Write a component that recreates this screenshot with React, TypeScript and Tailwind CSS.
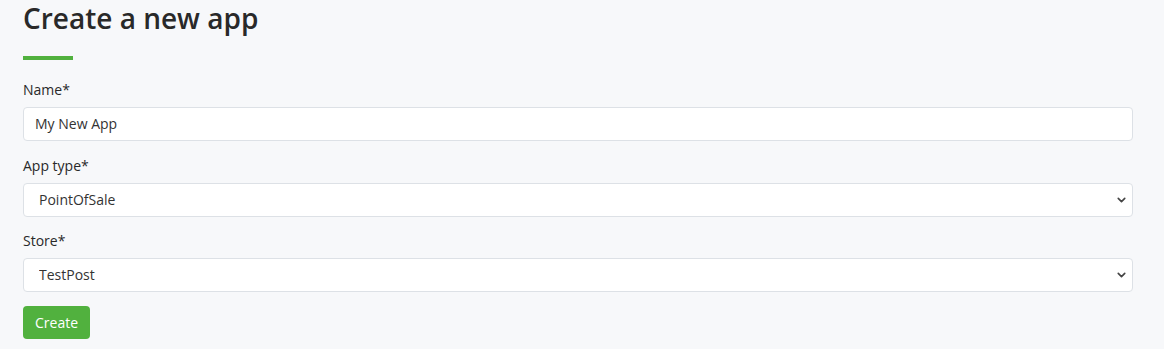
import { ChevronDown } from "lucide-react";

const FIELDS = [
  { label: "Name*", kind: "input", value: "My New App", gap: "mb-[14px]" },
  { label: "App type*", kind: "select", value: "PointOfSale", gap: "mb-[13px]" },
  { label: "Store*", kind: "select", value: "TestPost", gap: "mb-[14px]" },
];

export default function App() {
  return (
    <div className="min-h-screen bg-[#f7f8fa] text-[#292929]" style={{ fontFamily: '"Open Sans", "Liberation Sans", sans-serif' }}>
      <div className="w-[1110px] ml-[23px] pt-[2px]">
        <h1 className="text-[28px] leading-[1.2] font-semibold">Create a new app</h1>
        <div className="w-[50px] h-[4px] bg-[#51b13e] mt-[20px] mb-[19px]" />

        {FIELDS.map((f) => (
          <div key={f.label} className={f.gap}>
            <label className="block text-[14px] leading-[21px] mb-[7px]">{f.label}</label>
            {f.kind === "input" ? (
              <input
                defaultValue={f.value}
                className="block w-full h-[34px] px-[11px] bg-white border border-[#dde1e6] rounded-[4px] text-[14px] text-[#333] outline-none"
              />
            ) : (
              <div className="relative">
                <select
                  defaultValue={f.value}
                  className="block w-full h-[34px] pl-[15px] pr-8 bg-white border border-[#dde1e6] rounded-[4px] text-[14px] text-[#333] appearance-none outline-none"
                >
                  <option>{f.value}</option>
                </select>
                <ChevronDown
                  className="absolute right-[5px] top-1/2 -translate-y-1/2 w-[13px] h-[13px] text-[#444] pointer-events-none"
                  strokeWidth={3}
                />
              </div>
            )}
          </div>
        ))}

        <button className="h-[33px] px-[12px] bg-[#51b13e] text-white text-[14px] rounded-[4px]">Create</button>
      </div>
    </div>
  );
}
